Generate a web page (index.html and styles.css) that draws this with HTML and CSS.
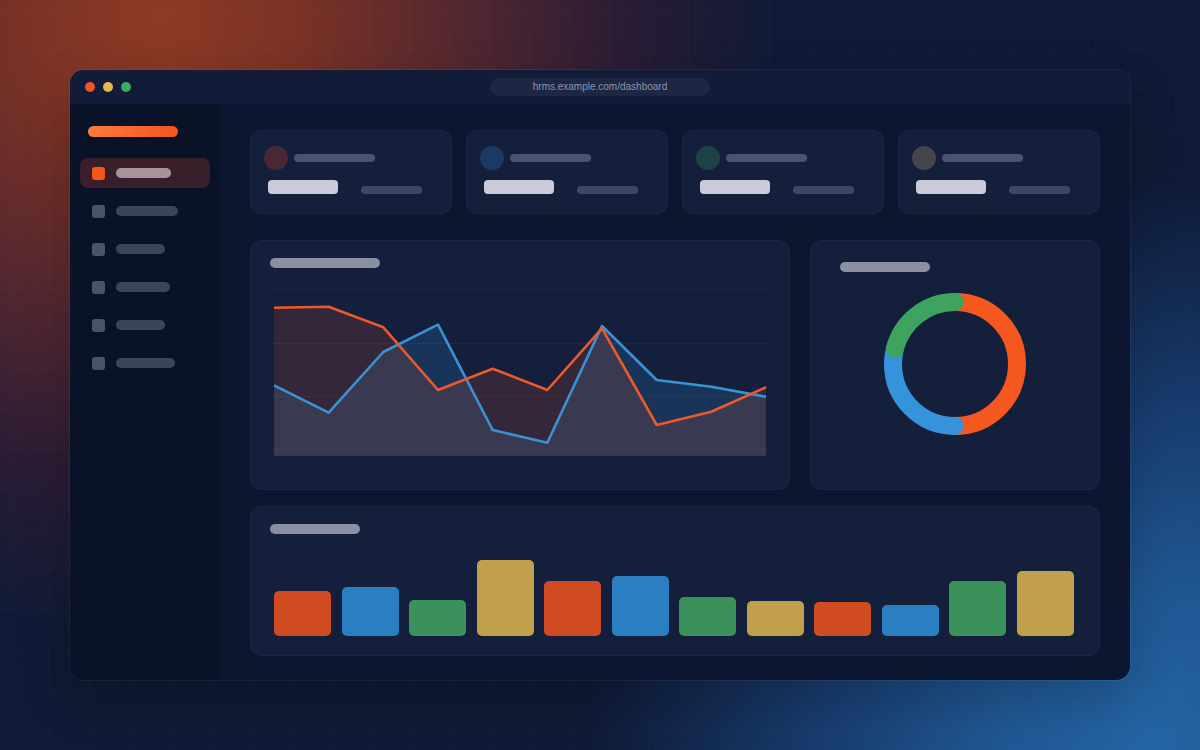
FILE: index.html
```html
<!DOCTYPE html>
<html lang="en">
<head>
<meta charset="utf-8">
<title>HRMS Dashboard</title>
<link rel="stylesheet" href="styles.css">
</head>
<body>
<div class="stage">
  <div class="window">
    <div class="titlebar">
      <div class="dots">
        <span class="dot dot-red"></span>
        <span class="dot dot-yellow"></span>
        <span class="dot dot-green"></span>
      </div>
      <div class="url">hrms.example.com/dashboard</div>
      <div></div>
    </div>
    <div class="body">
      <aside class="sidebar">
        <div class="logo"></div>
        <nav class="nav">
          <div class="nav-item active"><span class="nav-icon"></span><span class="nav-label" style="width:55px"></span></div>
          <div class="nav-item"><span class="nav-icon"></span><span class="nav-label" style="width:62px"></span></div>
          <div class="nav-item"><span class="nav-icon"></span><span class="nav-label" style="width:49px"></span></div>
          <div class="nav-item"><span class="nav-icon"></span><span class="nav-label" style="width:54px"></span></div>
          <div class="nav-item"><span class="nav-icon"></span><span class="nav-label" style="width:49px"></span></div>
          <div class="nav-item"><span class="nav-icon"></span><span class="nav-label" style="width:59px"></span></div>
        </nav>
      </aside>
      <main class="main">
        <section class="stats">
          <div class="card stat">
            <div class="stat-head"><span class="avatar av-red"></span><span class="stat-label"></span></div>
            <div class="stat-row"><span class="stat-value"></span><span class="stat-sub"></span></div>
          </div>
          <div class="card stat">
            <div class="stat-head"><span class="avatar av-blue"></span><span class="stat-label"></span></div>
            <div class="stat-row"><span class="stat-value"></span><span class="stat-sub"></span></div>
          </div>
          <div class="card stat">
            <div class="stat-head"><span class="avatar av-green"></span><span class="stat-label"></span></div>
            <div class="stat-row"><span class="stat-value"></span><span class="stat-sub"></span></div>
          </div>
          <div class="card stat">
            <div class="stat-head"><span class="avatar av-gray"></span><span class="stat-label"></span></div>
            <div class="stat-row"><span class="stat-value"></span><span class="stat-sub"></span></div>
          </div>
        </section>
        <section class="mid">
          <div class="card line-card">
            <div class="card-title line-title"></div>
            <svg class="line-chart" width="504" height="180" viewBox="0 0 504 180">
              <g stroke="rgba(255,255,255,0.045)" stroke-width="1">
                <line x1="0" y1="9.5" x2="504" y2="9.5"/>
                <line x1="0" y1="63.5" x2="504" y2="63.5"/>
                <line x1="0" y1="116.5" x2="504" y2="116.5"/>
                <line x1="0" y1="169.5" x2="504" y2="169.5"/>
              </g>
              <polygon fill="rgba(52,152,219,0.18)" points="6,176 6,105.3 60.7,132.7 115.3,72 170,44.7 224.7,150 279.3,162.7 334,46 388.7,100 443.3,106.7 498,116.7 498,176"/>
              <polygon fill="rgba(240,88,50,0.15)" points="6,176 6,27.7 60.7,26.7 115.3,47.3 170,110 224.7,88.7 279.3,110 334,48.3 388.7,145 443.3,131.7 498,107.3 498,176"/>
              <polyline fill="none" stroke="#3a91d6" stroke-width="2.6" stroke-linejoin="round" points="6,105.3 60.7,132.7 115.3,72 170,44.7 224.7,150 279.3,162.7 334,46 388.7,100 443.3,106.7 498,116.7"/>
              <polyline fill="none" stroke="#ec5a2c" stroke-width="2.6" stroke-linejoin="round" points="6,27.7 60.7,26.7 115.3,47.3 170,110 224.7,88.7 279.3,110 334,48.3 388.7,145 443.3,131.7 498,107.3"/>
            </svg>
          </div>
          <div class="card donut-card">
            <div class="card-title donut-title"></div>
            <svg class="donut" width="142" height="142" viewBox="0 0 142 142">
              <g transform="rotate(-90 71 71)" fill="none" stroke-width="18" stroke-linecap="round">
                <circle cx="71" cy="71" r="62" stroke="#f4581f" stroke-dasharray="194.8 389.6" stroke-dashoffset="0"/>
                <circle cx="71" cy="71" r="62" stroke="#3593dc" stroke-dasharray="112.5 389.6" stroke-dashoffset="-194.8"/>
                <circle cx="71" cy="71" r="62" stroke="#3da35f" stroke-dasharray="81.8 389.6" stroke-dashoffset="-307.3"/>
              </g>
            </svg>
          </div>
        </section>
        <section class="card bar-card">
          <div class="card-title bar-title"></div>
          <div class="bars">
            <span class="bar b-red" style="height:45px"></span>
            <span class="bar b-blue" style="height:49px"></span>
            <span class="bar b-green" style="height:36px"></span>
            <span class="bar b-yellow" style="height:76px"></span>
            <span class="bar b-red" style="height:55px"></span>
            <span class="bar b-blue" style="height:60px"></span>
            <span class="bar b-green" style="height:39px"></span>
            <span class="bar b-yellow" style="height:35px"></span>
            <span class="bar b-red" style="height:34px"></span>
            <span class="bar b-blue" style="height:31px"></span>
            <span class="bar b-green" style="height:55px"></span>
            <span class="bar b-yellow" style="height:65px"></span>
          </div>
        </section>
      </main>
    </div>
  </div>
</div>
</body>
</html>
```

FILE: styles.css
```css
* { box-sizing: border-box; }

html, body {
  margin: 0;
  padding: 0;
}

body {
  width: 1200px;
  height: 750px;
  overflow: hidden;
  font-family: "Liberation Sans", Arial, sans-serif;
  background-color: #0f1a36;
  background-image:
    linear-gradient(rgba(255,255,255,0.014) 1px, transparent 1px),
    linear-gradient(90deg, rgba(255,255,255,0.014) 1px, transparent 1px),
    radial-gradient(circle at 1150px 740px, #2464a3 0px, #1f5792 150px, #183c6e 330px, rgba(15,26,54,0) 560px),
    radial-gradient(circle at 160px 20px, #8d3a24 0px, #7a3226 140px, #4e2630 320px, #2a1c34 460px, rgba(15,26,54,0) 620px);
  background-size: 40px 40px, 40px 40px, 100% 100%, 100% 100%;
  background-position: 8px 8px, 8px 8px, 0 0, 0 0;
}

.stage {
  width: 1200px;
  height: 750px;
  padding: 70px;
}

.window {
  height: 610px;
  border-radius: 14px;
  overflow: hidden;
  background: #0d1631;
  display: flex;
  flex-direction: column;
  box-shadow: 0 0 0 1px rgba(255,255,255,0.06), 0 20px 50px rgba(0,0,0,0.2);
}

/* Title bar */
.titlebar {
  height: 34px;
  flex: none;
  background: #121c39;
  display: grid;
  grid-template-columns: 1fr auto 1fr;
  align-items: center;
  padding: 0 15px;
}

.dots {
  display: flex;
  gap: 8px;
}

.dot {
  width: 10px;
  height: 10px;
  border-radius: 50%;
}
.dot-red { background: #f0552a; }
.dot-yellow { background: #e6b94b; }
.dot-green { background: #3cab64; }

.url {
  width: 220px;
  height: 18px;
  border-radius: 9px;
  background: #1d2743;
  color: #8d95ab;
  font-size: 10px;
  line-height: 18px;
  text-align: center;
}

/* Body */
.body {
  flex: 1;
  display: flex;
  min-height: 0;
}

.sidebar {
  width: 150px;
  flex: none;
  background: #0a1228;
  padding: 22px 10px;
}

.logo {
  width: 90px;
  height: 11px;
  margin-left: 8px;
  border-radius: 6px;
  background: linear-gradient(90deg, #ff7a3d, #f2541f);
}

.nav {
  margin-top: 21px;
  display: flex;
  flex-direction: column;
  gap: 8px;
}

.nav-item {
  height: 30px;
  display: flex;
  align-items: center;
  gap: 11px;
  padding-left: 12px;
  border-radius: 8px;
}

.nav-icon {
  width: 13px;
  height: 13px;
  border-radius: 3px;
  background: #4b5366;
}

.nav-label {
  height: 10px;
  border-radius: 5px;
  background: #3c4558;
}

.nav-item.active {
  background: #3a1f2b;
}
.nav-item.active .nav-icon { background: #f2561f; }
.nav-item.active .nav-label { background: #a6949a; }

/* Main */
.main {
  flex: 1;
  padding: 26px 30px 24px;
  display: flex;
  flex-direction: column;
}

.card {
  background: #141f3c;
  border-radius: 12px;
  box-shadow: inset 0 0 0 1px rgba(255,255,255,0.04);
}

.card-title {
  height: 10px;
  border-radius: 5px;
  background: #8a90a2;
}

.stats {
  display: grid;
  grid-template-columns: repeat(4, 1fr);
  gap: 14px;
  height: 84px;
  margin-bottom: 26px;
}

.stat {
  padding: 16px 14px;
}

.stat-head {
  display: flex;
  align-items: center;
  gap: 6px;
}

.avatar {
  width: 24px;
  height: 24px;
  border-radius: 50%;
}
.av-red { background: #4a2833; }
.av-blue { background: #1b3a65; }
.av-green { background: #1c4345; }
.av-gray { background: #45464a; }

.stat-label {
  width: 81px;
  height: 8px;
  border-radius: 4px;
  background: #4a5470;
}

.stat-row {
  display: flex;
  align-items: flex-end;
  gap: 23px;
  margin-top: 10px;
  padding-left: 4px;
}

.stat-value {
  width: 70px;
  height: 14px;
  border-radius: 4px;
  background: #c9cbd6;
}

.stat-sub {
  width: 61px;
  height: 8px;
  border-radius: 4px;
  background: #3e4863;
}

.mid {
  display: grid;
  grid-template-columns: 540px 290px;
  gap: 20px;
  height: 250px;
  margin-bottom: 16px;
}

.line-card {
  padding: 18px 18px 0;
}

.line-title {
  width: 110px;
  margin-left: 2px;
}

.line-chart {
  display: block;
  margin-top: 12px;
}

.donut-card {
  padding: 22px 30px 0;
  display: flex;
  flex-direction: column;
  align-items: center;
}

.donut-title {
  width: 90px;
  align-self: flex-start;
}

.donut {
  display: block;
  margin-top: 21px;
}

.bar-card {
  height: 150px;
  padding: 18px 20px 0;
}

.bar-title {
  width: 90px;
}

.bars {
  height: 102px;
  margin: 0 6px 0 4px;
  display: flex;
  align-items: flex-end;
  justify-content: space-between;
}

.bar {
  width: 57px;
  border-radius: 5px;
}
.b-red { background: #d04a22; }
.b-blue { background: #2a7fc1; }
.b-green { background: #3a915c; }
.b-yellow { background: #c0a04a; }
```
